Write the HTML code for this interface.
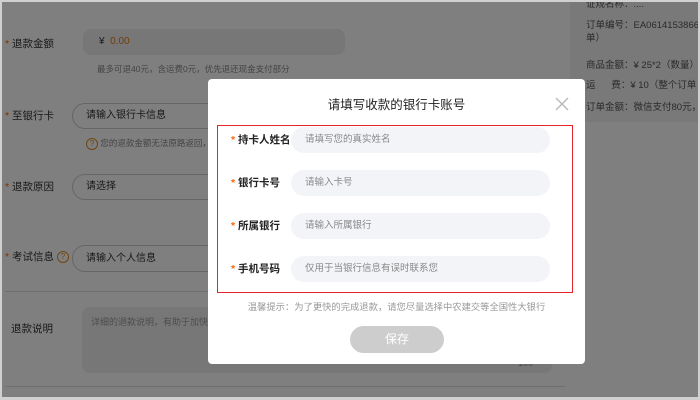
<!DOCTYPE html>
<html><head><meta charset="utf-8"><style>
*{margin:0;padding:0;box-sizing:border-box}
body{width:700px;height:400px;overflow:hidden;position:relative;background:#fff;font-family:"Liberation Sans","Noto Sans CJK SC",sans-serif;font-size:10px;color:#333}
.a{position:absolute;white-space:nowrap}
.star{color:#f60}
.ov{position:absolute;left:0;top:0;width:700px;height:400px;background:rgba(0,0,0,.5)}
.frame{position:absolute;left:0;top:0;width:700px;height:400px;border:2px solid #d0d0d0;border-bottom-width:3px}
.in{position:absolute;left:291px;width:259px;height:26px;border-radius:13px;background:#f3f4f8;color:#888;font-size:9.5px;line-height:26px;padding-left:14px}
.lb{position:absolute;left:231px;font-size:10.5px;color:#222;font-weight:bold;line-height:12px}
.q{display:inline-block;width:12px;height:12px;border:1px solid #e08a20;border-radius:50%;color:#e08a20;font-size:8px;text-align:center;line-height:10px;vertical-align:middle}
</style></head><body>
<div class="a" style="left:570px;top:0;width:130px;height:122px;background:#f2f2f2"></div>
<div class="a" style="left:5px;top:36px;font-size:10.5px"><span class="star">*</span> 退款金额</div>
<div class="a" style="left:83px;top:29px;width:262px;height:26px;border-radius:8px;background:#eeeef0;line-height:26px;padding-left:16px;font-size:10px">¥ &nbsp;<span style="color:#e07a10">0.00</span></div>
<div class="a" style="left:97px;top:63px;font-size:8.5px;color:#888">最多可退40元，含运费0元，优先退还现金支付部分</div>
<div class="a" style="left:5px;top:108px;font-size:10.5px"><span class="star">*</span> 至银行卡</div>
<div class="a" style="left:72px;top:103px;width:200px;height:26px;border:1px solid #ccc;border-radius:13px;line-height:24px;padding-left:13px;font-size:10px">请输入银行卡信息</div>
<div class="a" style="left:86px;top:137px;font-size:8.5px;color:#888"><span class="q">?</span> 您的退款金额无法原路返回，需</div>
<div class="a" style="left:5px;top:179px;font-size:10.5px"><span class="star">*</span> 退款原因</div>
<div class="a" style="left:72px;top:174px;width:200px;height:26px;border:1px solid #ccc;border-radius:13px;line-height:24px;padding-left:13px;font-size:10px">请选择</div>
<div class="a" style="left:5px;top:249px;font-size:10.5px"><span class="star">*</span> 考试信息 <span class="q">?</span></div>
<div class="a" style="left:72px;top:245px;width:200px;height:27px;border:1px solid #ccc;border-radius:13px;line-height:25px;padding-left:13px;font-size:10px">请输入个人信息</div>
<div class="a" style="left:5px;top:291px;width:560px;height:1px;background:#ddd"></div>
<div class="a" style="left:11px;top:321px;font-size:10.5px">退款说明</div>
<div class="a" style="left:82px;top:307px;width:470px;height:66px;border-radius:8px;background:#eeeef0;padding:8px 9px;font-size:9px;color:#999">详细的退款说明，有助于加快</div>
<div class="a" style="left:518px;top:358px;font-size:9px;color:#999">100</div>
<div class="a" style="left:5px;top:386px;width:560px;height:1px;background:#ddd"></div>
<div class="a" style="left:586px;top:-4px;font-size:9.5px;color:#555">证规名称：....</div>
<div class="a" style="left:586px;top:19px;font-size:9.5px;line-height:13px;color:#555">订单编号：EA06141538668<br>单）</div>
<div class="a" style="left:586px;top:57px;font-size:9.5px;color:#555">商品金额：¥ 25*2（数量）</div>
<div class="a" style="left:586px;top:77px;font-size:9.5px;color:#555">运 &nbsp; &nbsp; &nbsp;费：¥ 10（整个订单</div>
<div class="a" style="left:586px;top:99px;font-size:9.5px;color:#555">订单金额：微信支付80元，</div>
<div class="ov"></div>
<div class="frame"></div>
<div class="a" style="left:208px;top:79px;width:377px;height:285px;background:#fff;border-radius:4px"></div>
<div class="a" style="left:208px;top:94px;width:377px;text-align:center;font-size:12.5px;color:#222">请填写收款的银行卡账号</div>
<svg class="a" style="left:555px;top:97px" width="14" height="14"><path d="M1 1L13 13M13 1L1 13" stroke="#bbb" stroke-width="1.5"/></svg>
<div class="a" style="left:217px;top:125px;width:356px;height:168px;border:1.5px solid #e8242a"></div>
<div class="lb" style="top:134px"><span class="star">*</span> 持卡人姓名</div>
<div class="in" style="top:127px">请填写您的真实姓名</div>
<div class="lb" style="top:177px"><span class="star">*</span> 银行卡号</div>
<div class="in" style="top:170px">请输入卡号</div>
<div class="lb" style="top:220px"><span class="star">*</span> 所属银行</div>
<div class="in" style="top:213px">请输入所属银行</div>
<div class="lb" style="top:263px"><span class="star">*</span> 手机号码</div>
<div class="in" style="top:256px">仅用于当银行信息有误时联系您</div>
<div class="a" style="left:208px;top:299px;width:377px;text-align:center;font-size:9.3px;color:#999">温馨提示：为了更快的完成退款，请您尽量选择中农建交等全国性大银行</div>
<div class="a" style="left:350px;top:326px;width:94px;height:27px;border-radius:14px;background:#cdcdcd;color:#fff;font-size:12px;text-align:center;line-height:27px">保存</div>
</body></html>
